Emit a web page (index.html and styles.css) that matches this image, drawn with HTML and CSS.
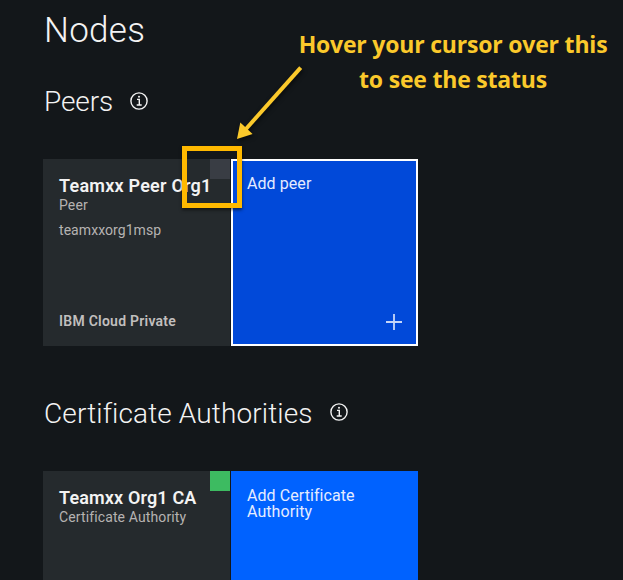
FILE: index.html
```html
<!DOCTYPE html>
<html lang="en">
<head>
<meta charset="utf-8">
<title>Nodes</title>
<link rel="stylesheet" href="styles.css">
</head>
<body>
<main class="page">
  <h1 class="title">Nodes</h1>
  <section class="group">
    <h2 class="heading"><span>Peers</span>
      <svg class="info" viewBox="0 0 18 18"><circle cx="9" cy="9" r="8.1"/><path d="M7 7.4h2.3v5.4M6.7 13h5"/><circle class="dot" cx="9" cy="4.8" r="1"/></svg>
    </h2>
    <div class="tiles">
      <article class="tile">
        <span class="status"></span>
        <h3 class="name">Teamxx Peer Org1</h3>
        <p class="kind">Peer</p>
        <p class="msp">teamxxorg1msp</p>
        <p class="location">IBM Cloud Private</p>
      </article>
      <button class="tile add focused"><span>Add peer</span>
        <svg class="plus" viewBox="0 0 16 16"><path d="M8 0v16M0 8h16"/></svg>
      </button>
    </div>
  </section>
  <section class="group cut">
    <h2 class="heading wide"><span>Certificate Authorities</span>
      <svg class="info" viewBox="0 0 18 18"><circle cx="9" cy="9" r="8.1"/><path d="M7 7.4h2.3v5.4M6.7 13h5"/><circle class="dot" cx="9" cy="4.8" r="1"/></svg>
    </h2>
    <div class="tiles">
      <article class="tile">
        <span class="status running"></span>
        <h3 class="name ca">Teamxx Org1 CA</h3>
        <p class="kind">Certificate Authority</p>
      </article>
      <button class="tile add">Add Certificate<br>Authority</button>
    </div>
  </section>
</main>
<p class="note">Hover your cursor over this<br>to see the status</p>
<svg class="arrow" viewBox="0 0 90 90"><path class="shaft" d="M80.7 17.6L25.5 79.5"/><path class="head" d="M17 89L20.3 72.5L32.6 84Z"/></svg>
<div class="highlight"></div>
</body>
</html>
```
FILE: styles.css
```css
* { box-sizing: border-box; margin: 0; padding: 0; }
body {
  position: relative;
  width: 623px;
  height: 580px;
  overflow: hidden;
  background: #13171a;
  color: #f3f3f3;
  font-family: Roboto, "Open Sans", sans-serif;
}
.page { padding: 9px 0 0 43px; }
.title { height: 43px; padding-left: 1px; font-size: 35px; line-height: 43px; font-weight: 300; letter-spacing: 0.3px; }
.group { height: 312px; padding-top: 32px; }
.heading {
  display: flex;
  align-items: center;
  gap: 17px;
  height: 36px;
  padding-left: 1px;
  font-size: 28px;
  line-height: 36px;
  font-weight: 300;
  letter-spacing: -0.1px;
}
.heading.wide { letter-spacing: 0.12px; }
.info { width: 18px; height: 18px; margin-top: -2px; fill: none; stroke: #f3f3f3; stroke-width: 1.4; }
.wide .info { margin-top: -4px; }
.info .dot { fill: #f3f3f3; stroke: none; }
.tiles { display: flex; gap: 1px; margin-top: 39px; }
.tile {
  position: relative;
  display: flex;
  flex-direction: column;
  width: 187px;
  height: 187px;
  padding: 16px;
  background: #252a2d;
}
.cut { height: 216px; }
.cut .tile { height: 109px; }
.status { position: absolute; top: 0; right: 0; width: 20px; height: 20px; background: #393d44; }
.status.running { background: #3dbb61; }
.name { position: relative; font-size: 18px; line-height: 21px; font-weight: 600; letter-spacing: 0.23px; white-space: nowrap; }
.name.ca { letter-spacing: 0.15px; }
.kind { font-size: 14px; line-height: 18px; letter-spacing: 0.12px; color: #b6b3b2; white-space: nowrap; }
.msp { margin-top: 7px; font-size: 14px; line-height: 18px; letter-spacing: 0.06px; color: #b6b3b2; }
.location { margin-top: auto; font-size: 14px; line-height: 18px; font-weight: 600; letter-spacing: 0.25px; color: #c1bfbe; white-space: nowrap; }
.add {
  padding-top: 17px;
  border: 0;
  background: #0062ff;
  color: #e5ecff;
  font: 400 16px/16px Roboto, sans-serif;
  letter-spacing: 0.07px;
  text-align: left;
  align-items: flex-start;
}
.focused { border: 2px solid #fff; padding: 15px 14px 14px; background: #0149d9; }
.plus { width: 16px; height: 16px; margin: auto 0 0 auto; stroke: #c6d6f8; stroke-width: 1.8; }
.note {
  position: absolute;
  top: 27px;
  left: 283px;
  width: 340px;
  padding-right: 0;
  font: 700 23px/35px "Open Sans", "Noto Sans", sans-serif;
  letter-spacing: -0.2px;
  color: #fbc92b;
  text-align: center;
  white-space: nowrap;
}
.arrow { position: absolute; left: 220px; top: 50px; width: 90px; height: 90px; overflow: visible; filter: drop-shadow(1px 2px 2px #0009); }
.shaft { stroke: #fbc92b; stroke-width: 4; }
.head { fill: #fbc92b; }
.highlight {
  position: absolute;
  left: 182px;
  top: 146px;
  width: 60px;
  height: 62px;
  border: 5px solid #ffb900;
  box-shadow: 0 2px 3px #0008;
}
```
